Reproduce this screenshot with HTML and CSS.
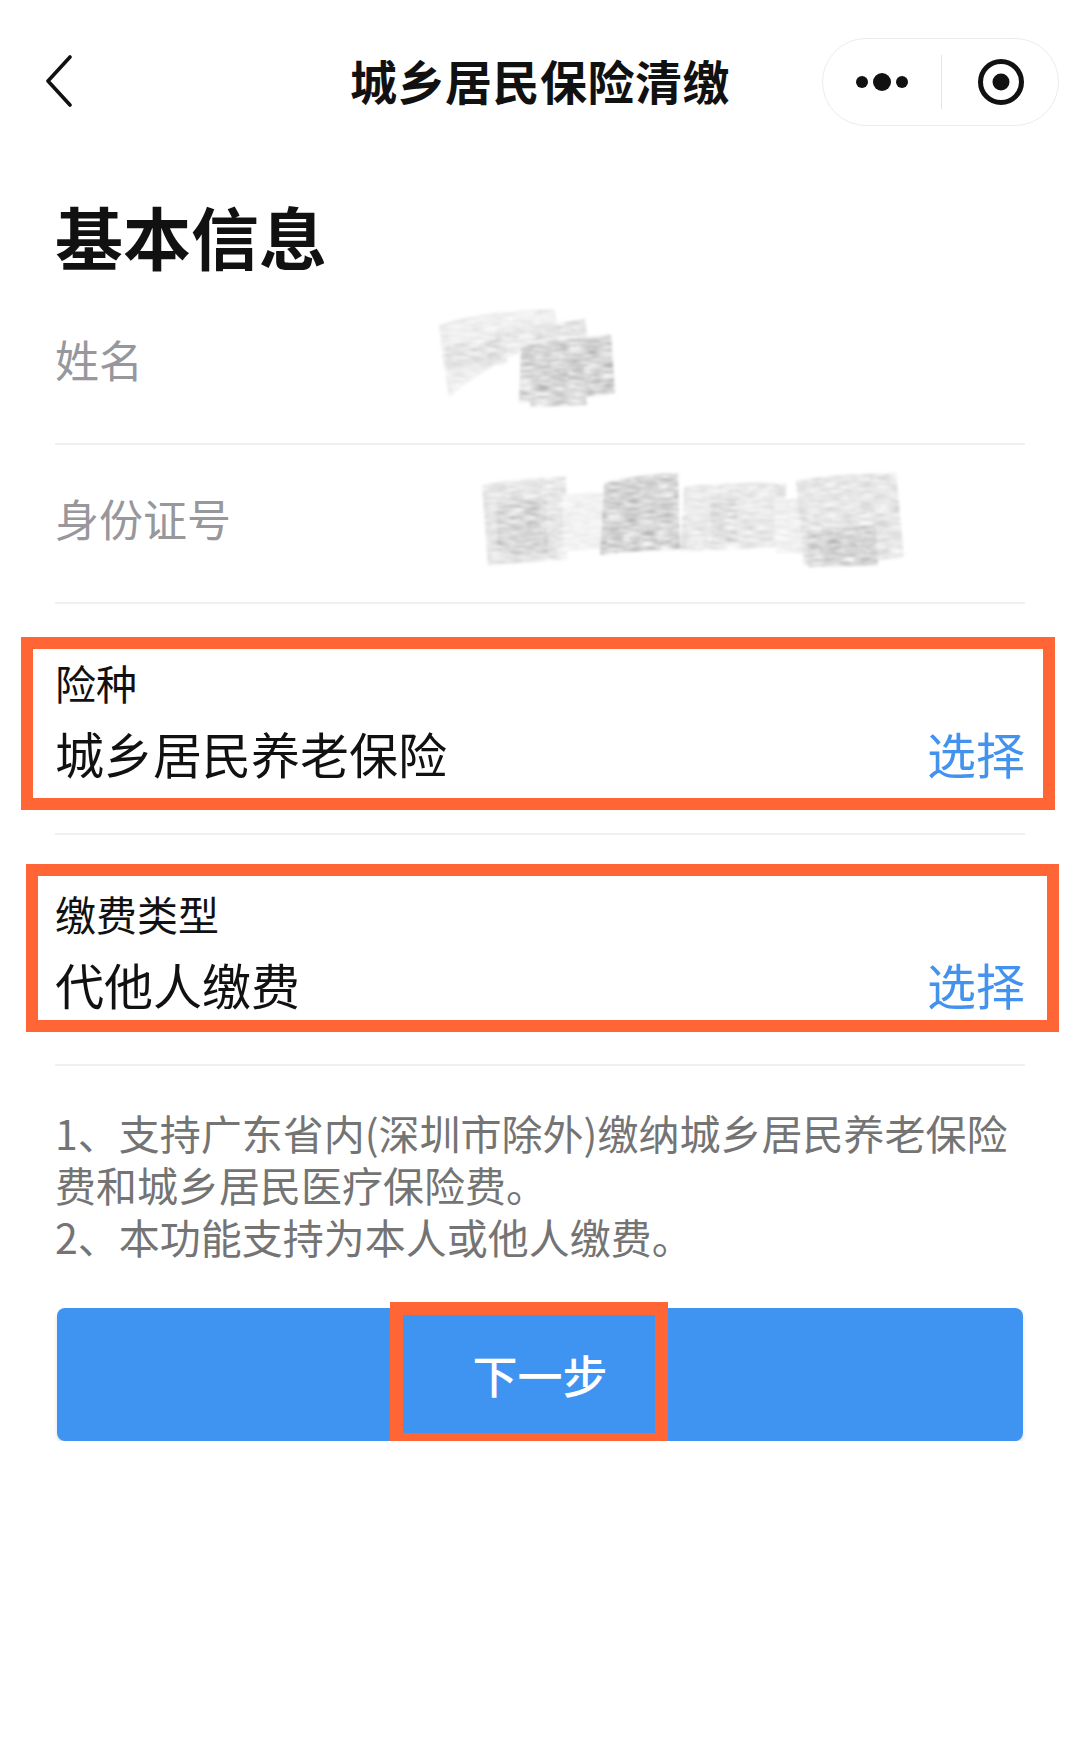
FILE: index.html
```html
<!DOCTYPE html>
<html lang="zh-CN">
<head>
<meta charset="UTF-8">
<meta name="viewport" content="width=device-width, initial-scale=1.0">
<title>城乡居民保险清缴</title>
<link rel="stylesheet" href="styles.css">
</head>
<body>

<svg class="defs" width="0" height="0">
    <filter id="pencil" x="-10%" y="-10%" width="120%" height="120%">
        <feTurbulence type="fractalNoise" baseFrequency="0.06 0.7" numOctaves="3" seed="7" result="noise"/>
        <feColorMatrix in="noise" type="matrix" values="0 0 0 0 0  0 0 0 0 0  0 0 0 0 0  0 0 0 1.8 -0.45" result="grain"/>
        <feComposite in="SourceGraphic" in2="grain" operator="in" result="textured"/>
        <feGaussianBlur in="textured" stdDeviation="1.6"/>
    </filter>
</svg>

<div class="nav">
    <div class="nav-left">
        <svg class="back" width="40" height="56" viewBox="0 0 40 56">
            <path d="M30 6 L8 30 L30 54" fill="none" stroke="#111" stroke-width="3.6" stroke-linecap="round" stroke-linejoin="round"/>
        </svg>
    </div>
    <div class="nav-title">城乡居民保险清缴</div>
    <div class="nav-right">
        <div class="capsule">
            <svg class="capsule-btn" width="118" height="86" viewBox="0 0 118 86">
                <circle cx="39" cy="43" r="6" fill="#111"/>
                <circle cx="59" cy="43" r="9" fill="#111"/>
                <circle cx="79" cy="43" r="6" fill="#111"/>
            </svg>
            <span class="capsule-line"></span>
            <svg class="capsule-btn" width="116" height="86" viewBox="0 0 116 86">
                <circle cx="59" cy="43" r="20.5" fill="none" stroke="#111" stroke-width="5"/>
                <circle cx="59" cy="43" r="8.5" fill="#111"/>
            </svg>
        </div>
    </div>
</div>

<div class="page">
    <h1 class="heading">基本信息</h1>

    <div class="info-row">
        <span class="info-label">姓名</span>
        <svg class="scribble scribble-name" width="185" height="110" viewBox="0 0 185 110" filter="url(#pencil)">
            <path d="M4 24 Q40 10 120 8 L124 40 Q70 50 14 96 L8 60 Z" fill="#dcdcdc"/>
            <path d="M60 30 L150 18 L152 34 L62 42 Z" fill="#c6c6c6"/>
            <path d="M10 46 Q40 38 72 40 L72 62 Q40 66 12 70 Z" fill="#c4c4c4"/>
            <path d="M86 46 Q130 36 176 34 L180 92 Q130 98 84 102 Z" fill="#a6a6a6"/>
            <path d="M92 90 L150 84 L152 104 L96 106 Z" fill="#b0b0b0"/>
        </svg>
    </div>

    <div class="info-row">
        <span class="info-label">身份证号</span>
        <svg class="scribble scribble-id" width="440" height="100" viewBox="0 0 440 100" filter="url(#pencil)">
            <path d="M8 16 Q50 8 92 8 L94 90 Q50 94 14 96 Z" fill="#c8c8c8"/>
            <path d="M22 32 L72 28 L74 84 L24 86 Z" fill="#ababab"/>
            <path d="M88 26 L140 22 L142 78 L90 82 Z" fill="#e2e2e2"/>
            <path d="M130 14 Q170 4 204 4 L206 80 Q160 82 126 86 Z" fill="#a6a6a6"/>
            <path d="M210 18 Q260 12 312 14 L312 78 Q260 80 206 82 Z" fill="#d0d0d0"/>
            <path d="M236 30 L262 30 L264 74 L238 74 Z" fill="#bcbcbc"/>
            <path d="M300 30 L330 30 L332 84 L302 84 Z" fill="#e0e0e0"/>
            <path d="M322 12 Q370 4 422 4 L430 88 Q380 94 330 96 Z" fill="#cacaca"/>
            <path d="M332 62 L402 56 L404 96 L334 98 Z" fill="#a4a4a4"/>
        </svg>
    </div>

    <div class="select-row">
        <div class="select-label">险种</div>
        <div class="select-main">
            <span class="select-value">城乡居民养老保险</span>
            <span class="select-link">选择</span>
        </div>
        <div class="mark mark-insure"></div>
    </div>

    <div class="select-row">
        <div class="select-label">缴费类型</div>
        <div class="select-main">
            <span class="select-value">代他人缴费</span>
            <span class="select-link">选择</span>
        </div>
        <div class="mark mark-type"></div>
    </div>

    <div class="notes">
        <p>1、支持广东省内(深圳市除外)缴纳城乡居民养老保险费和城乡居民医疗保险费。</p>
        <p>2、本功能支持为本人或他人缴费。</p>
    </div>

    <div class="next-btn">
        下一步
        <div class="mark mark-next"></div>
    </div>
</div>

</body>
</html>
```

FILE: styles.css
```css
body {
    margin: 0;
    background-color: #fff;
    font-family: "Noto Sans CJK SC", "Noto Sans", sans-serif;
    color: #111;
}

.defs {
    position: absolute;
}

.nav {
    display: grid;
    grid-template-columns: 1fr auto 1fr;
    align-items: center;
    height: 164px;
    padding: 0 21px;
}

.nav-left {
    display: flex;
    align-items: center;
}

.back {
    margin-left: 19px;
    margin-bottom: 6px;
}

.nav-title {
    font-size: 47px;
    font-weight: 700;
    line-height: 1;
    letter-spacing: 0.5px;
    margin-bottom: 6px;
}

.nav-right {
    display: flex;
    justify-content: flex-end;
}

.capsule {
    display: flex;
    align-items: center;
    height: 86px;
    border: 1px solid #ececec;
    border-radius: 44px;
    background-color: #fff;
}

.capsule-btn {
    display: block;
}

.capsule-line {
    width: 1px;
    height: 54px;
    background-color: #e4e4e4;
}

.page {
    padding: 0 55px 0 55px;
}

.heading {
    margin: 38px 0 16px;
    font-size: 68px;
    line-height: 68px;
    font-weight: 700;
}

.info-row {
    display: flex;
    align-items: center;
    height: 157px;
    border-bottom: 2px solid #f0f0f0;
}

.info-label {
    font-size: 44px;
    line-height: 44px;
    color: #97979c;
    margin-bottom: 12px;
}

.scribble {
    display: block;
}

.scribble-name {
    margin-left: 292px;
    margin-bottom: 18px;
}

.scribble-id {
    margin-left: 243px;
    margin-bottom: 10px;
}

.select-row {
    position: relative;
    padding: 57px 0 54px;
    border-bottom: 2px solid #f0f0f0;
}

.select-label {
    font-size: 41px;
    line-height: 42px;
    margin-bottom: 24px;
}

.select-main {
    display: flex;
    justify-content: space-between;
    align-items: center;
    font-size: 49px;
    line-height: 52px;
}

.select-link {
    color: #4292ee;
}

.mark {
    position: absolute;
    border: 12px solid #ff6535;
    box-sizing: border-box;
}

.mark-insure {
    top: 33px;
    left: -34px;
    width: 1034px;
    height: 173px;
}

.mark-type {
    top: 29px;
    left: -29px;
    width: 1033px;
    height: 168px;
}

.notes {
    padding-top: 40px;
    font-size: 41px;
    line-height: 52px;
    color: #747474;
}

.notes p {
    margin: 0;
}

.next-btn {
    position: relative;
    display: flex;
    justify-content: center;
    align-items: center;
    height: 133px;
    margin: 46px 2px 0 2px;
    border-radius: 8px;
    background-color: #3f94f2;
    box-shadow: 0 3px 4px rgba(0, 0, 0, 0.12);
    color: #fff;
    font-size: 45px;
    font-weight: 500;
}

.mark-next {
    top: -6px;
    left: 333px;
    width: 278px;
    height: 144px;
    border-width: 13px;
}
```
